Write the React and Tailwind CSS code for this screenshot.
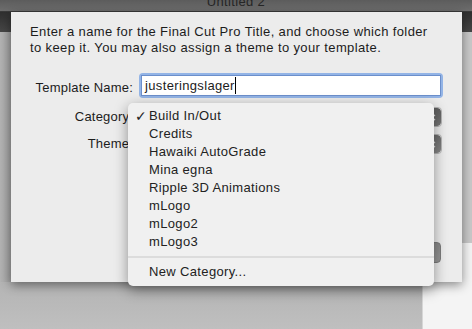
import React from 'react';

const categories = [
  'Build In/Out',
  'Credits',
  'Hawaiki AutoGrade',
  'Mina egna',
  'Ripple 3D Animations',
  'mLogo',
  'mLogo2',
  'mLogo3',
];

const Stepper = ({ tone }) => (
  <div className={`w-[17px] h-full rounded-r-[4px] flex flex-col items-center justify-center gap-[1px] ${tone}`}>
    <svg width="7" height="5" viewBox="0 0 7 5"><path d="M1 4 L3.5 1.5 L6 4" stroke="#e6e6e6" strokeWidth="1.2" fill="none" /></svg>
    <svg width="7" height="5" viewBox="0 0 7 5"><path d="M1 1 L3.5 3.5 L6 1" stroke="#e6e6e6" strokeWidth="1.2" fill="none" /></svg>
  </div>
);

const PopupButton = ({ label, tone }) => (
  <div className="flex items-center h-[20px]">
    <div className="w-[109px] shrink-0 text-right pr-[6px] tracking-[0.2px] whitespace-nowrap">{label}</div>
    <div className="w-[303px] h-full flex rounded-[4px] border border-[#b5b5b5] bg-white overflow-hidden">
      <div className="flex-1" />
      <Stepper tone={tone} />
    </div>
  </div>
);

const App = () => {
  return (
    <div className="w-[472px] h-[329px] overflow-hidden flex flex-col bg-[#bdbdbd] font-['Liberation_Sans',Arial,sans-serif] text-[13px] tracking-[0.35px] text-[#1c1c1c]">
      {/* window title bar, mostly cut off */}
      <div className="h-[12px] shrink-0 overflow-hidden flex justify-center items-end bg-gradient-to-b from-[#5c5c5c] to-[#6e6e6e] border-b border-[#3a3a3a]">
        <span className="leading-[13px] mb-[3px] text-[#262626]">Untitled 2</span>
      </div>

      <div className="flex h-[270px] shrink-0">
        {/* window left edge */}
        <div className="w-[11px] flex flex-col">
          <div className="h-[20px] bg-gradient-to-b from-[#2f2f2f] to-[#474747]" />
          <div className="flex-1 bg-gradient-to-r from-[#b3b3b3] to-[#a2a2a2]" />
        </div>

        {/* sheet */}
        <div className="relative z-10 w-[451px] h-[270px] bg-[#ececec] pt-[12px] pl-[19px] pr-[19px] shadow-[0_3px_10px_rgba(0,0,0,0.45)]">
          <p className="leading-[16px] whitespace-nowrap tracking-[0.38px]">
            Enter a name for the Final Cut Pro Title, and choose which folder
            <br />
            to keep it. You may also assign a theme to your template.
          </p>

          <div className="flex items-center h-[25px] mt-[17px]">
            <div className="w-[109px] shrink-0 text-right pr-[6px] mt-[5px] tracking-[0.2px] whitespace-nowrap">Template Name:</div>
            <div className="w-[304px] h-full rounded-[4px] bg-[#93b4e6] p-[2px]">
              <div className="h-full bg-white border border-[#6c8fcb] pl-[3px] flex items-end pb-[1px]">
                <span className="leading-[16px]">justeringslager</span>
                <span className="w-px h-[17px] bg-black" />
              </div>
            </div>
          </div>

          <div className="mt-[9px]">
            <PopupButton label="Category:" tone="bg-gradient-to-b from-[#5e5e5e] to-[#777777]" />
          </div>
          <div className="mt-[7px]">
            <PopupButton label="Theme:" tone="bg-gradient-to-b from-[#6e6e6e] to-[#858585]" />
          </div>

          <div className="flex justify-end mt-[88px] pr-[2px]">
            <div className="w-[84px] h-[21px] rounded-[4px] bg-gradient-to-b from-[#8a8a8a] to-[#969696] border border-[#7c7c7c]" />
          </div>

          {/* open category menu */}
          <div className="absolute left-[117px] top-[91px] w-[306px] h-[183px] rounded-[5px] bg-[#f0f0f0] pt-[4px] shadow-[0_4px_14px_rgba(0,0,0,0.4)] z-20">
            {categories.map((name, i) => (
              <div key={name} className="flex h-[18px] leading-[18px] text-[#222222]">
                <span className="w-[21px] pl-[7px] text-[14px] tracking-normal font-['DejaVu_Sans',sans-serif]">{i === 0 ? '✓' : ''}</span>
                <span>{name}</span>
              </div>
            ))}
            <div className="h-[12px] flex items-center">
              <div className="w-full h-[2px] bg-[#dcdcdc]" />
            </div>
            <div className="flex h-[18px] leading-[18px] text-[#222222]">
              <span className="w-[21px]" />
              <span>New Category...</span>
            </div>
          </div>
        </div>

        {/* window right edge */}
        <div className="w-[10px] flex flex-col">
          <div className="h-[20px] bg-gradient-to-b from-[#2f2f2f] to-[#474747]" />
          <div className="h-[211px] bg-[#c9c9c9]" />
          <div className="flex-1 bg-[#f4f4f4]" />
        </div>
      </div>

      {/* content beneath the sheet */}
      <div className="flex flex-1">
        <div className="w-[422px] bg-gradient-to-b from-[#b4b4b4] to-[#bfbfbf]" />
        <div className="flex-1 bg-[#f4f4f4] border-l border-[#d6d6d6]" />
      </div>
    </div>
  );
};

export default App;
